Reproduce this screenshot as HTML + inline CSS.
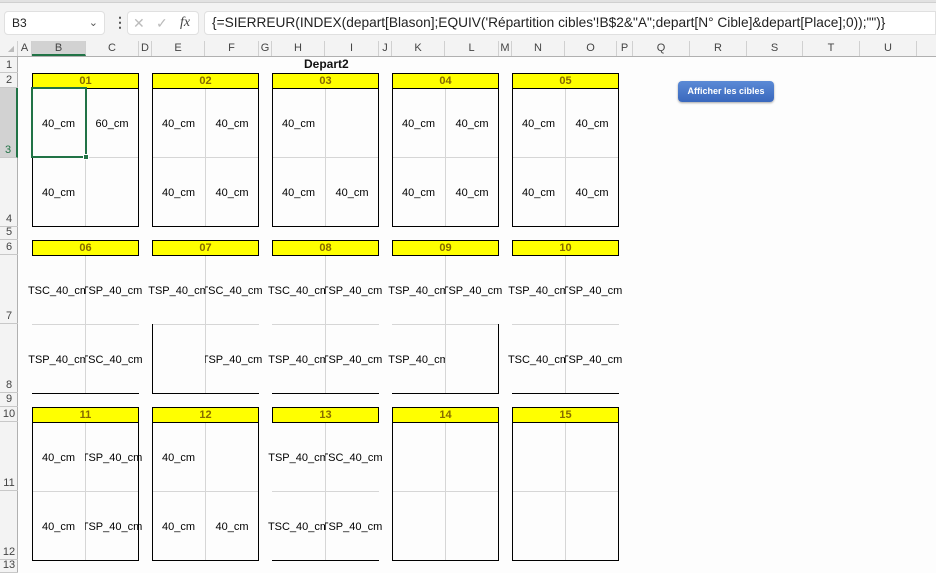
<!DOCTYPE html>
<html><head><meta charset="utf-8"><style>
*{margin:0;padding:0;box-sizing:border-box}
body{width:936px;height:573px;overflow:hidden;background:#fdfdfd;font-family:"Liberation Sans",Arial,sans-serif;position:relative}
.a{position:absolute}
.t{position:absolute;width:107px;height:154px}
.h{position:absolute;left:0;top:0;width:107px;height:16px;background:#ff0;border:1px solid #000;font-weight:bold;font-size:11px;color:#866a00;text-align:center;line-height:14px}
.gv{position:absolute;left:53px;top:16px;width:1px;height:138px;background:#d6d6d6}
.gh{position:absolute;left:0;top:84px;width:107px;height:1px;background:#d6d6d6}
.c{position:absolute;width:53px;height:69px;display:flex;justify-content:center;align-items:center;font-size:11px;white-space:nowrap;color:#000;padding-top:3px}
.l{left:0;clip-path:inset(0 0 0 -30px)}
.r{left:53px;width:54px;clip-path:inset(0 -30px 0 0)}
.r1{top:15px}.r2{top:84px}
.bl{position:absolute;left:0;width:1px;background:#000}
.br{position:absolute;left:106px;width:1px;background:#000}
.bb{position:absolute;left:0;top:153px;width:107px;height:1px;background:#000}
.full .bl,.full .br{top:15px;height:139px}
.ch{position:absolute;top:41px;height:15px;font-size:11px;color:#444;text-align:center;line-height:15px;border-right:1px solid #d0d0d0}
.rh{position:absolute;left:0;width:18px;font-size:11px;color:#444;text-align:center;border-bottom:1px solid #c8c8c8;display:flex;align-items:flex-end;justify-content:center;line-height:13px}
</style></head><body>
<div class="a" style="left:0;top:0;width:936px;height:41px;background:#f3f3f3"></div>
<div class="a" style="left:0;top:0;width:936px;height:3px;background:#e2e2e2;border-bottom:1px solid #d0d0d0"></div>
<div class="a" style="left:4px;top:11px;width:101px;height:24px;background:#fff;border:1px solid #e0e0e0;border-radius:4px;font-size:12px;line-height:22px;padding-left:7px;color:#222">B3<span style="position:absolute;right:6px;top:0;color:#555;font-size:11px">&#8964;</span></div>
<div class="a" style="left:113px;top:14px;font-size:14px;color:#555;font-weight:bold">&#8942;</div>
<div class="a" style="left:127px;top:11px;width:72px;height:24px;background:#fff;border:1px solid #e0e0e0;border-radius:4px;font-size:14px;line-height:22px;color:#bbb"><span style="position:absolute;left:5px">&#10005;</span><span style="position:absolute;left:28px">&#10003;</span><span style="position:absolute;left:52px;color:#444;font-family:'Liberation Serif',serif;font-style:italic">fx</span></div>
<div class="a" style="left:204px;top:11px;width:732px;height:24px;background:#fff;border:1px solid #e0e0e0;border-radius:4px 0 0 4px;font-size:13.7px;line-height:22px;padding-left:7px;color:#222;white-space:nowrap">{=SIERREUR(INDEX(depart[Blason];EQUIV('Répartition cibles'!B$2&amp;"A";depart[N° Cible]&amp;depart[Place];0));"")}</div>
<div class="a" style="left:0;top:41px;width:936px;height:16px;background:#f3f3f3;border-bottom:1px solid #b0b0b0"></div>
<div class="ch" style="left:0;width:18px;color:#bbb;font-size:8px;text-align:right;padding-right:3px">&#9698;</div>
<div class="ch" style="left:18px;width:14px">A</div>
<div class="ch" style="left:32px;width:54px;background:#d2d2d2;border-bottom:2px solid #217346;line-height:14px">B</div>
<div class="ch" style="left:86px;width:53px">C</div>
<div class="ch" style="left:139px;width:13px">D</div>
<div class="ch" style="left:152px;width:53px">E</div>
<div class="ch" style="left:205px;width:54px">F</div>
<div class="ch" style="left:259px;width:13px">G</div>
<div class="ch" style="left:272px;width:53px">H</div>
<div class="ch" style="left:325px;width:54px">I</div>
<div class="ch" style="left:379px;width:13px">J</div>
<div class="ch" style="left:392px;width:53px">K</div>
<div class="ch" style="left:445px;width:54px">L</div>
<div class="ch" style="left:499px;width:13px">M</div>
<div class="ch" style="left:512px;width:53px">N</div>
<div class="ch" style="left:565px;width:52px">O</div>
<div class="ch" style="left:617px;width:16px">P</div>
<div class="ch" style="left:633px;width:57px">Q</div>
<div class="ch" style="left:690px;width:57px">R</div>
<div class="ch" style="left:747px;width:56px">S</div>
<div class="ch" style="left:803px;width:57px">T</div>
<div class="ch" style="left:860px;width:57px">U</div>
<div class="a" style="left:0;top:57px;width:18px;height:516px;background:#f3f3f3;border-right:1px solid #b0b0b0"></div>
<div class="rh" style="top:57px;height:16px">1</div>
<div class="rh" style="top:73px;height:15px">2</div>
<div class="rh" style="top:88px;height:70px;background:#d2d2d2;color:#217346;border-right:2px solid #217346">3</div>
<div class="rh" style="top:158px;height:69px">4</div>
<div class="rh" style="top:227px;height:13px">5</div>
<div class="rh" style="top:240px;height:15px">6</div>
<div class="rh" style="top:255px;height:69px">7</div>
<div class="rh" style="top:324px;height:69px">8</div>
<div class="rh" style="top:393px;height:14px">9</div>
<div class="rh" style="top:407px;height:15px">10</div>
<div class="rh" style="top:422px;height:69px">11</div>
<div class="rh" style="top:491px;height:69px">12</div>
<div class="rh" style="top:560px;height:13px">13</div>

<div class="a" style="left:304px;top:57px;font-size:12px;font-weight:bold;color:#111">Depart2</div>

<div class="t full" style="left:32px;top:73px"><div class="gv"></div><div class="gh"></div><div class="h">01</div>
<div class="c l r1">40_cm</div><div class="c r r1">60_cm</div><div class="c l r2">40_cm</div><div class="c r r2"></div>
<div class="bl"></div><div class="br"></div><div class="bb"></div></div>
<div class="t full" style="left:152px;top:73px"><div class="gv"></div><div class="gh"></div><div class="h">02</div>
<div class="c l r1">40_cm</div><div class="c r r1">40_cm</div><div class="c l r2">40_cm</div><div class="c r r2">40_cm</div>
<div class="bl"></div><div class="br"></div><div class="bb"></div></div>
<div class="t full" style="left:272px;top:73px"><div class="gv"></div><div class="gh"></div><div class="h">03</div>
<div class="c l r1">40_cm</div><div class="c r r1"></div><div class="c l r2">40_cm</div><div class="c r r2">40_cm</div>
<div class="bl"></div><div class="br"></div><div class="bb"></div></div>
<div class="t full" style="left:392px;top:73px"><div class="gv"></div><div class="gh"></div><div class="h">04</div>
<div class="c l r1">40_cm</div><div class="c r r1">40_cm</div><div class="c l r2">40_cm</div><div class="c r r2">40_cm</div>
<div class="bl"></div><div class="br"></div><div class="bb"></div></div>
<div class="t full" style="left:512px;top:73px"><div class="gv"></div><div class="gh"></div><div class="h">05</div>
<div class="c l r1">40_cm</div><div class="c r r1">40_cm</div><div class="c l r2">40_cm</div><div class="c r r2">40_cm</div>
<div class="bl"></div><div class="br"></div><div class="bb"></div></div>

<div class="t" style="left:32px;top:240px"><div class="gv"></div><div class="gh"></div><div class="h">06</div>
<div class="c l r1">TSC_40_cm</div><div class="c r r1">TSP_40_cm</div><div class="c l r2">TSP_40_cm</div><div class="c r r2">TSC_40_cm</div>
<div class="bb"></div></div>
<div class="t" style="left:152px;top:240px"><div class="gv"></div><div class="gh"></div><div class="h">07</div>
<div class="c l r1">TSP_40_cm</div><div class="c r r1">TSC_40_cm</div><div class="c l r2"></div><div class="c r r2">TSP_40_cm</div>
<div class="bl" style="top:84px;height:70px"></div><div class="bb"></div></div>
<div class="t" style="left:272px;top:240px"><div class="gv"></div><div class="gh"></div><div class="h">08</div>
<div class="c l r1">TSC_40_cm</div><div class="c r r1">TSP_40_cm</div><div class="c l r2">TSP_40_cm</div><div class="c r r2">TSP_40_cm</div>
<div class="bb"></div></div>
<div class="t" style="left:392px;top:240px"><div class="gv"></div><div class="gh"></div><div class="h">09</div>
<div class="c l r1">TSP_40_cm</div><div class="c r r1">TSP_40_cm</div><div class="c l r2">TSP_40_cm</div><div class="c r r2"></div>
<div class="br" style="top:84px;height:70px"></div><div class="bb"></div></div>
<div class="t" style="left:512px;top:240px"><div class="gv"></div><div class="gh"></div><div class="h">10</div>
<div class="c l r1">TSP_40_cm</div><div class="c r r1">TSP_40_cm</div><div class="c l r2">TSC_40_cm</div><div class="c r r2">TSP_40_cm</div>
<div class="bb"></div></div>

<div class="t full" style="left:32px;top:407px"><div class="gv"></div><div class="gh"></div><div class="h">11</div>
<div class="c l r1">40_cm</div><div class="c r r1">TSP_40_cm</div><div class="c l r2">40_cm</div><div class="c r r2">TSP_40_cm</div>
<div class="bl"></div><div class="br"></div><div class="bb"></div></div>
<div class="t full" style="left:152px;top:407px"><div class="gv"></div><div class="gh"></div><div class="h">12</div>
<div class="c l r1">40_cm</div><div class="c r r1"></div><div class="c l r2">40_cm</div><div class="c r r2">40_cm</div>
<div class="bl"></div><div class="br"></div><div class="bb"></div></div>
<div class="t" style="left:272px;top:407px"><div class="gv"></div><div class="gh"></div><div class="h">13</div>
<div class="c l r1">TSP_40_cm</div><div class="c r r1">TSC_40_cm</div><div class="c l r2">TSC_40_cm</div><div class="c r r2">TSP_40_cm</div>
<div class="bb"></div></div>
<div class="t full" style="left:392px;top:407px"><div class="gv"></div><div class="gh"></div><div class="h">14</div>
<div class="bl"></div><div class="br"></div><div class="bb"></div></div>
<div class="t full" style="left:512px;top:407px"><div class="gv"></div><div class="gh"></div><div class="h">15</div>
<div class="bl"></div><div class="br"></div><div class="bb"></div></div>

<div class="a" style="left:31px;top:87px;width:56px;height:71px;border:2px solid #217346"></div>
<div class="a" style="left:83px;top:154px;width:6px;height:6px;background:#217346;border:1px solid #fff"></div>

<div class="a" style="left:678px;top:81px;width:96px;height:21px;border-radius:4px;background:linear-gradient(#5b8ad6,#3a68bd);box-shadow:0 1px 2px rgba(0,0,0,.35);color:#fff;font-size:9px;font-weight:bold;text-align:center;line-height:21px">Afficher les cibles</div>
</body></html>
